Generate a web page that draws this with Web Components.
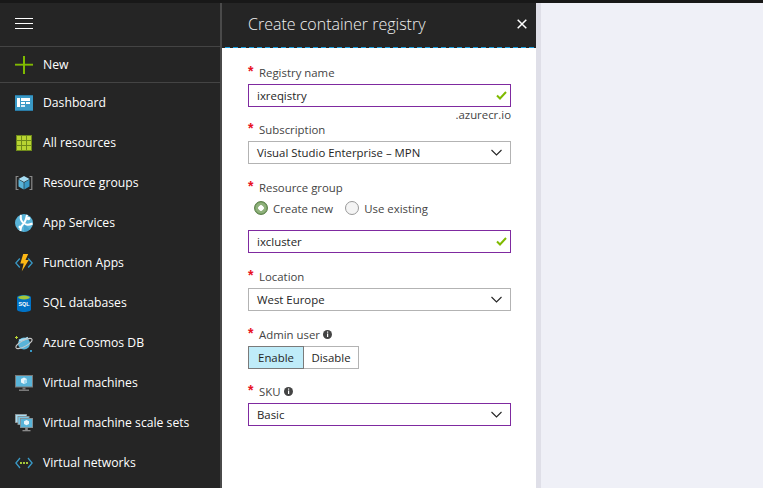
<!DOCTYPE html>
<html><head><meta charset="utf-8">
<style>
html,body{margin:0;padding:0;height:100%;overflow:hidden;background:#eff0f7}
body{font-family:"Open Sans","Noto Sans",sans-serif;font-size:12px}
</style></head>
<body>
<az-portal>
  <az-sidebar slot="side">
    <az-nav-item class="new" label="New"><svg viewBox="0 0 18 18" width="18" height="18"><rect x="0" y="7.6" width="18" height="2.4" fill="#5f7f12"/><rect x="0" y="8" width="18" height="1" fill="#7fba00"/><rect x="8" y="0" width="2" height="18" fill="#7fba00"/></svg></az-nav-item>
    <az-nav-item label="Dashboard"><svg viewBox="0 0 18 16" width="18" height="16"><rect width="18" height="16" fill="#3999c6"/><rect y="0" width="18" height="1" fill="#2a7ba5"/><rect y="15" width="18" height="1" fill="#2a7ba5"/><rect x="2" y="3" width="3" height="9" fill="#fff"/><rect x="6" y="3" width="9" height="3" fill="#fff"/><rect x="6" y="7" width="4" height="2" fill="#fff"/><rect x="11" y="7" width="4" height="2" fill="#fff"/><rect x="6" y="10" width="4" height="2" fill="#d8ecf6"/></svg></az-nav-item>
    <az-nav-item label="All resources"><svg viewBox="0 0 16 16" width="16" height="16"><rect width="16" height="16" fill="#6f8a1a"/><g fill="#b8d432"><rect x="1" y="1" width="4" height="4"/><rect x="6" y="1" width="4" height="4"/><rect x="11" y="1" width="4" height="4"/><rect x="1" y="6" width="4" height="4"/><rect x="6" y="6" width="4" height="4"/><rect x="11" y="6" width="4" height="4"/><rect x="1" y="11" width="4" height="4"/><rect x="6" y="11" width="4" height="4"/><rect x="11" y="11" width="4" height="4"/></g></svg></az-nav-item>
    <az-nav-item label="Resource groups"><svg viewBox="0 0 18 16" width="18" height="16"><path d="M3.5 1.5H1.2v13h2.3M14.5 1.5h2.3v13h-2.3" fill="none" stroke="#8a8a8a" stroke-width="1.2"/><path d="M9 1l5.5 3L9 7 3.500 4z" fill="#a5dcf2"/><path d="M3.500 4.500L8.700 7.500v7l-5.200-3z" fill="#59b4d9"/><path d="M14.500 4.500L9.300 7.500v7l5.200-3z" fill="#3999c6"/></svg></az-nav-item>
    <az-nav-item label="App Services"><svg viewBox="0 0 18 18" width="18" height="18"><circle cx="9" cy="9" r="9" fill="#59b4d9"/><path d="M6 1C5 5 7 8 9 9.500c2 1.500 5.500 1.500 8.500 0M9 9.500C7 11 5.500 13 5.500 17M12 .8C11.500 4 10.500 7 9 9.500" fill="none" stroke="#fff" stroke-width="2"/><circle cx="13.500" cy="4.500" r="1.800" fill="#fff"/><circle cx="5" cy="13" r="1.500" fill="#fff"/><path d="M9 10l6 5.500A9 9 0 0 1 9 18z" fill="#3999c6" opacity=".6"/></svg></az-nav-item>
    <az-nav-item label="Function Apps"><svg viewBox="0 0 18 18" width="18" height="18"><path d="M4.800 4.500L.8 9l4 4.500M13.200 4.500l4 4.500-4 4.500" fill="none" stroke="#3999c6" stroke-width="1.300"/><path d="M8.200 0h5L10.500 6h3.300L6.700 17.500 8.700 9.500H5.300z" fill="#fcb714"/></svg></az-nav-item>
    <az-nav-item label="SQL databases"><svg viewBox="0 0 14 17" width="14" height="17"><path d="M0 2.500C0 1 3 0 7 0s7 1 7 2.500v12C14 16 11 17 7 17s-7-1-7-2.500z" fill="#0072c6"/><ellipse cx="7" cy="2.500" rx="5.800" ry="1.900" fill="#a4c63a"/><text x="7" y="11.400" text-anchor="middle" font-family="Liberation Sans" font-size="5.400" font-weight="700" fill="#fff">SQL</text></svg></az-nav-item>
    <az-nav-item label="Azure Cosmos DB"><svg viewBox="0 0 18 18" width="18" height="18"><circle cx="9" cy="9.500" r="6" fill="#59b4d9"/><path d="M4 6.500c3-1 6-1 9-3" stroke="#a5dcf2" stroke-width="2" fill="none"/><ellipse cx="9" cy="9.500" rx="9" ry="3" transform="rotate(-28 9 9.500)" fill="none" stroke="#c8c8c8" stroke-width="1"/><path d="M1.500 2v3M0 3.500h3" stroke="#b8d432" stroke-width="1"/><rect x="15" y="16" width="2" height="2" fill="#3999c6"/></svg></az-nav-item>
    <az-nav-item label="Virtual machines"><svg viewBox="0 0 18 17" width="18" height="17"><rect width="18" height="12.500" fill="#7a7a7a"/><rect x="1" y="1" width="16" height="10.500" fill="#59b4d9"/><rect x="7.500" y="12.500" width="3" height="2" fill="#7a7a7a"/><rect x="4" y="14.500" width="10" height="1.500" fill="#7a7a7a"/><path d="M9 2.500l3 1.500v3.500L9 9 6 7.500V4z" fill="#e8f5fb"/><path d="M9 5.500V9l3-1.500V4z" fill="#a5dcf2"/></svg></az-nav-item>
    <az-nav-item label="Virtual machine scale sets"><svg viewBox="0 0 18 18" width="18" height="18"><rect x="0" y="0" width="12" height="9" fill="#8a8a8a"/><rect x=".8" y=".8" width="10.400" height="7.400" fill="#a5dcf2"/><rect x="2.500" y="2" width="12" height="9" fill="#8a8a8a"/><rect x="3.300" y="2.800" width="10.400" height="7.400" fill="#7cc5e3"/><rect x="5" y="4" width="13" height="10" fill="#8a8a8a"/><rect x="5.800" y="4.800" width="11.400" height="8.400" fill="#59b4d9"/><path d="M11.500 6l2.500 1.200v2.800l-2.500 1.200L9 10V7.200z" fill="#e8f5fb"/><rect x="10.200" y="14" width="2.600" height="2" fill="#8a8a8a"/><rect x="7.500" y="16" width="8" height="1.300" fill="#8a8a8a"/></svg></az-nav-item>
    <az-nav-item label="Virtual networks"><svg viewBox="0 0 18 12" width="18" height="12"><path d="M5 1L.9 6 5 11M13 1l4.100 5L13 11" fill="none" stroke="#3999c6" stroke-width="1.300"/><g fill="#a4c63a"><rect x="5" y="5" width="2" height="2"/><rect x="8" y="5" width="2" height="2"/><rect x="11" y="5" width="2" height="2"/></g></svg></az-nav-item>
  </az-sidebar>
  <az-blade slot="blade" title-text="Create container registry">
    <az-field label="Registry name" style="--top:17px"><az-textbox value="ixreqistry" valid></az-textbox></az-field>
    <az-hint>.azurecr.io</az-hint>
    <az-field label="Subscription" style="--top:0px"><az-dropdown value="Visual Studio Enterprise – MPN"></az-dropdown></az-field>
    <az-field label="Resource group" style="--top:16px">
      <az-radios></az-radios>
      <az-textbox value="ixcluster" valid></az-textbox>
    </az-field>
    <az-field label="Location" style="--top:16px"><az-dropdown value="West Europe"></az-dropdown></az-field>
    <az-field label="Admin user" info style="--top:16px"><az-toggle></az-toggle></az-field>
    <az-field label="SKU" info style="--top:15px"><az-dropdown value="Basic" focused></az-dropdown></az-field>
  </az-blade>
</az-portal>
<script>
function def(name, html, init){
  customElements.define(name, class extends HTMLElement{
    connectedCallback(){
      if(this.shadowRoot) return;
      const r=this.attachShadow({mode:'open'});
      r.innerHTML = typeof html==='function'?html(this):html;
    }
  });
}
const esc=s=>String(s||'').replace(/&/g,'&amp;').replace(/</g,'&lt;');
def('az-portal',`<style>
:host{display:grid;grid-template-columns:220px 2px 314px 5px 1fr;grid-template-rows:3px 485px;width:763px;height:488px;overflow:hidden;background:#eff0f7}
.top{grid-column:1/-1;background:#181818}
.sb{background:#4a4a4a}
.edge{background:#dfdfe8}
.rest{background:#eff0f7}
.bar2{display:contents}
</style><div class="top"></div><slot name="side"></slot><div class="sb"></div><slot name="blade"></slot><div class="edge"></div><div class="rest"></div>`);
def('az-sidebar',`<style>
:host{display:flex;flex-direction:column;background:#252525;overflow:hidden;color:#fff}
.burger{height:44px;box-sizing:border-box;border-bottom:1px solid #444;display:flex;align-items:center;padding-left:15px;flex:none}
.burger svg{display:block;margin-top:-1px}
.list{display:flex;flex-direction:column}
::slotted(.new){height:36px;border-bottom:1px solid #444;}
</style><div class="burger"><svg width="18" height="12" viewBox="0 0 18 12"><path d="M0 .5h18M0 5.500h18M0 10.500h18" stroke="#fff" stroke-width="1"/></svg></div><div class="list"><slot></slot></div>`);
def('az-nav-item',h=>`<style>
:host{display:flex;align-items:center;height:40px;flex:none;box-sizing:border-box;color:#fff;font-size:12.2px;line-height:16px}
.ic{width:18px;margin-left:15px;margin-right:10px;display:flex;justify-content:center;align-items:center;flex:none}
.ic ::slotted(svg){display:block}
</style><span class="ic"><slot></slot></span><span>${esc(h.getAttribute('label'))}</span>`);
def('az-blade',h=>`<style>
:host{display:flex;flex-direction:column;background:#fff;overflow:hidden;min-width:0}
header{height:44px;flex:none;background:#252525;display:flex;align-items:center;justify-content:space-between;padding:0 9px 0 26px;box-sizing:border-box}
h1{margin:0;font-weight:300;font-size:16px;color:#f2f2f2;line-height:22px;position:relative;top:-1px}
.x{display:block;margin-top:-3px}
.dash{height:1px;flex:none;background:repeating-linear-gradient(90deg,#252525 0 3px,#1ba1e2 3px 8px)}
.body{flex:1;display:flex;flex-direction:column;padding:0 25px 0 26px;border-left:1px dashed #1ba1e2;margin-left:-1px;box-shadow:inset 0 0 0 0 #000}
</style><header><h1>${esc(h.getAttribute('title-text'))}</h1><svg class="x" width="10" height="10" viewBox="0 0 10 10"><path d="M.7.7l8.600 8.600M9.300.7L.7 9.300" stroke="#fff" stroke-width="1.500"/></svg></header><div class="dash"></div><div class="body"><slot></slot></div>`);
def('az-field',h=>`<style>
:host{display:block;margin-top:var(--top,0px);color:#444}
.lab{display:flex;align-items:center;height:15px;margin-bottom:4px;font-size:11.400px;line-height:15px;color:#444}
.star{width:11px;color:#e81123;font-size:14px;line-height:15px;font-weight:700;font-family:"Liberation Sans",sans-serif;position:relative;top:-1px;flex:none}
.i{margin-left:3px;display:block}
</style><div class="lab"><span class="star">*</span><span>${esc(h.getAttribute('label'))}</span>${h.hasAttribute('info')?'<svg class="i" width="9" height="9" viewBox="0 0 9 9"><circle cx="4.500" cy="4.500" r="4.500" fill="#444"/><rect x="4" y="1.500" width="1.200" height="1.200" fill="#fff"/><rect x="4" y="3.500" width="1.200" height="3.500" fill="#fff"/></svg>':''}</div><slot></slot>`);
def('az-textbox',h=>`<style>
:host{display:flex;align-items:center;justify-content:space-between;height:23px;box-sizing:border-box;border:1px solid #7f2aa0;padding:0 3px 0 8px;font-size:11.400px;color:#252525;background:#fff}
svg{display:block}
</style><span>${esc(h.getAttribute('value'))}</span><svg width="11" height="9" viewBox="0 0 11 9"><path d="M1 4.500L4 7.500 10 1" fill="none" stroke="#7fba00" stroke-width="2"/></svg>`);
def('az-dropdown',h=>`<style>
:host{display:flex;align-items:center;justify-content:space-between;height:23px;box-sizing:border-box;border:1px solid ${h.hasAttribute('focused')?'#7f2aa0':'#b3b3b3'};padding:0 8px 0 8px;font-size:11.400px;color:#252525;background:#fff}
svg{display:block}
</style><span>${esc(h.getAttribute('value'))}</span><svg width="11" height="7" viewBox="0 0 11 7"><path d="M.5 1l5 5 5-5" fill="none" stroke="#252525" stroke-width="1.100"/></svg>`);
def('az-hint',`<style>:host{display:block;text-align:right;font-size:11.400px;line-height:16px;height:16px;color:#444;margin-bottom:-1px}</style><slot></slot>`);
def('az-radios',`<style>
:host{display:flex;align-items:center;gap:12px;height:18px;margin:0 0 13px 6px;font-size:11.400px;color:#444;margin-top:0px}
.o{display:flex;align-items:center;gap:5px}
.c{width:14px;height:14px;border-radius:50%;box-sizing:border-box;border:1px solid #999;background:#f4f4f4;flex:none}
.on{border:1px solid #5c7f4a;background:radial-gradient(circle,#fff 0 2.500px,#8fb17c 3px 5px,#6f9a5a 6px);}
</style><span class="o"><span class="c on"></span>Create new</span><span class="o"><span class="c"></span>Use existing</span>`);
def('az-toggle',`<style>
:host{display:inline-flex;height:23px;font-size:11.400px;color:#252525;vertical-align:top}
span{display:flex;align-items:center;justify-content:center;box-sizing:border-box;height:23px;border:1px solid #b3b3b3}
.a{width:56px;background:#bfecf9;border-color:#7a7a7a}
.b{width:55px;border-left:0}
</style><span class="a">Enable</span><span class="b">Disable</span>`);
</script>
</body></html>
